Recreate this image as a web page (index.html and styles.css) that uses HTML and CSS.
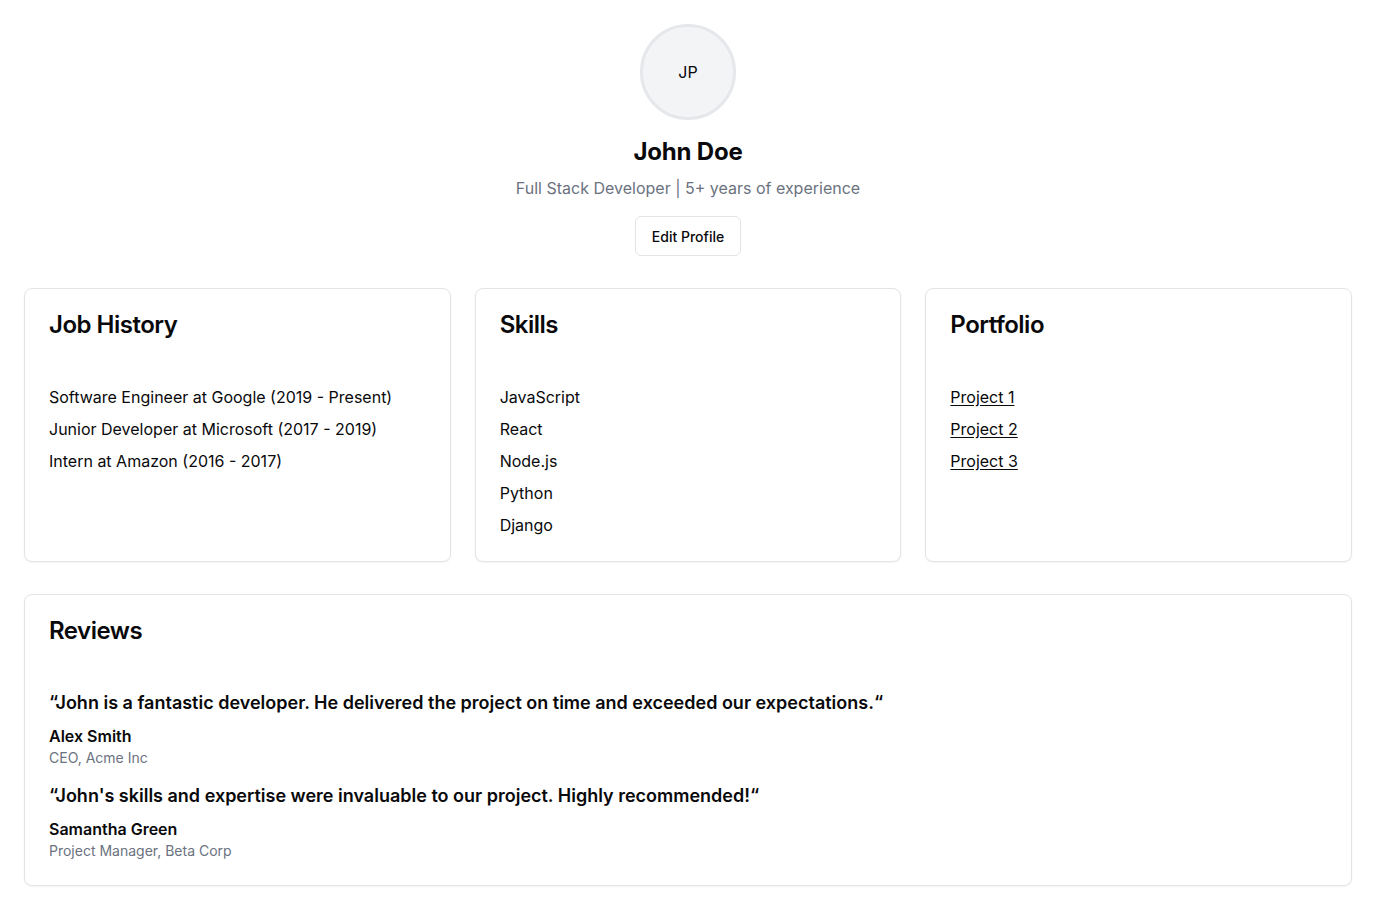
FILE: index.html
```html
<!DOCTYPE html>
<html lang="en">
<head>
<meta charset="utf-8">
<title>John Doe</title>
<link rel="stylesheet" href="styles.css">
</head>
<body>
<main class="page">
  <section class="profile">
    <div class="avatar"><span>JP</span></div>
    <h1 class="name">John Doe</h1>
    <p class="subtitle">Full Stack Developer | 5+ years of experience</p>
    <button class="btn">Edit Profile</button>
  </section>

  <section class="grid">
    <div class="card">
      <div class="card-header"><h2 class="card-title">Job History</h2></div>
      <div class="card-content">
        <ul class="list">
          <li>Software Engineer at Google (2019 - Present)</li>
          <li>Junior Developer at Microsoft (2017 - 2019)</li>
          <li>Intern at Amazon (2016 - 2017)</li>
        </ul>
      </div>
    </div>
    <div class="card">
      <div class="card-header"><h2 class="card-title">Skills</h2></div>
      <div class="card-content">
        <ul class="list">
          <li>JavaScript</li>
          <li>React</li>
          <li>Node.js</li>
          <li>Python</li>
          <li>Django</li>
        </ul>
      </div>
    </div>
    <div class="card">
      <div class="card-header"><h2 class="card-title">Portfolio</h2></div>
      <div class="card-content">
        <ul class="list">
          <li><a href="#" class="link">Project 1</a></li>
          <li><a href="#" class="link">Project 2</a></li>
          <li><a href="#" class="link">Project 3</a></li>
        </ul>
      </div>
    </div>
  </section>

  <section class="card reviews">
    <div class="card-header reviews-header"><h2 class="card-title">Reviews</h2></div>
    <div class="card-content review-list">
      <div class="review">
        <blockquote class="quote">“John is a fantastic developer. He delivered the project on time and exceeded our expectations.“</blockquote>
        <div class="author">Alex Smith</div>
        <div class="role">CEO, Acme Inc</div>
      </div>
      <div class="review">
        <blockquote class="quote">“John's skills and expertise were invaluable to our project. Highly recommended!“</blockquote>
        <div class="author">Samantha Green</div>
        <div class="role">Project Manager, Beta Corp</div>
      </div>
    </div>
  </section>
</main>
</body>
</html>
```

FILE: styles.css
```css
* { box-sizing: border-box; }
html, body { margin: 0; padding: 0; background: #fff; }
body {
  font-family: Inter, "Noto Sans", "Liberation Sans", sans-serif;
  color: #09090b;
  font-size: 16px;
  line-height: 24px;
}
.page {
  padding: 24px;
  display: flex;
  flex-direction: column;
  gap: 32px;
}
.profile {
  display: flex;
  flex-direction: column;
  align-items: center;
}
.avatar {
  width: 96px;
  height: 96px;
  border-radius: 50%;
  background: #f3f4f6;
  border: 3px solid #e5e7eb;
  display: flex;
  align-items: center;
  justify-content: center;
  font-size: 16px;
  color: #09090b;
}
.name {
  margin: 16px 0 0;
  font-size: 24px;
  line-height: 32px;
  font-weight: 700;
  letter-spacing: -0.2px;
}
.subtitle {
  margin: 8px 0 0;
  font-size: 16px;
  line-height: 24px;
  color: #6b7280;
}
.btn {
  margin-top: 16px;
  height: 40px;
  padding: 0 16px;
  font-family: inherit;
  font-size: 14px;
  font-weight: 500;
  color: #09090b;
  background: #fff;
  border: 1px solid #e4e4e7;
  border-radius: 6px;
  cursor: pointer;
}
.grid {
  display: grid;
  grid-template-columns: repeat(3, 1fr);
  gap: 24px;
}
.card {
  border: 1px solid #e4e4e7;
  border-radius: 8px;
  background: #fff;
  box-shadow: 0 1px 2px rgba(0,0,0,0.05);
}
.card-header {
  padding: 24px 24px 48px;
}
.reviews-header {
  padding-bottom: 46px;
}
.card-title {
  margin: 0;
  font-size: 24px;
  line-height: 24px;
  font-weight: 600;
  letter-spacing: -0.5px;
}
.card-content {
  padding: 0 24px 24px;
}
.list {
  list-style: none;
  margin: 0;
  padding: 0;
  display: flex;
  flex-direction: column;
  gap: 8px;
}
.link {
  color: #09090b;
  text-decoration: underline;
  text-underline-offset: 2px;
}
.review-list {
  display: flex;
  flex-direction: column;
  gap: 14px;
}
.quote {
  margin: 0;
  font-size: 18px;
  line-height: 28px;
  font-weight: 600;
}
.author {
  margin-top: 7px;
  font-weight: 600;
}
.role {
  font-size: 14px;
  line-height: 20px;
  color: #6b7280;
}
```
